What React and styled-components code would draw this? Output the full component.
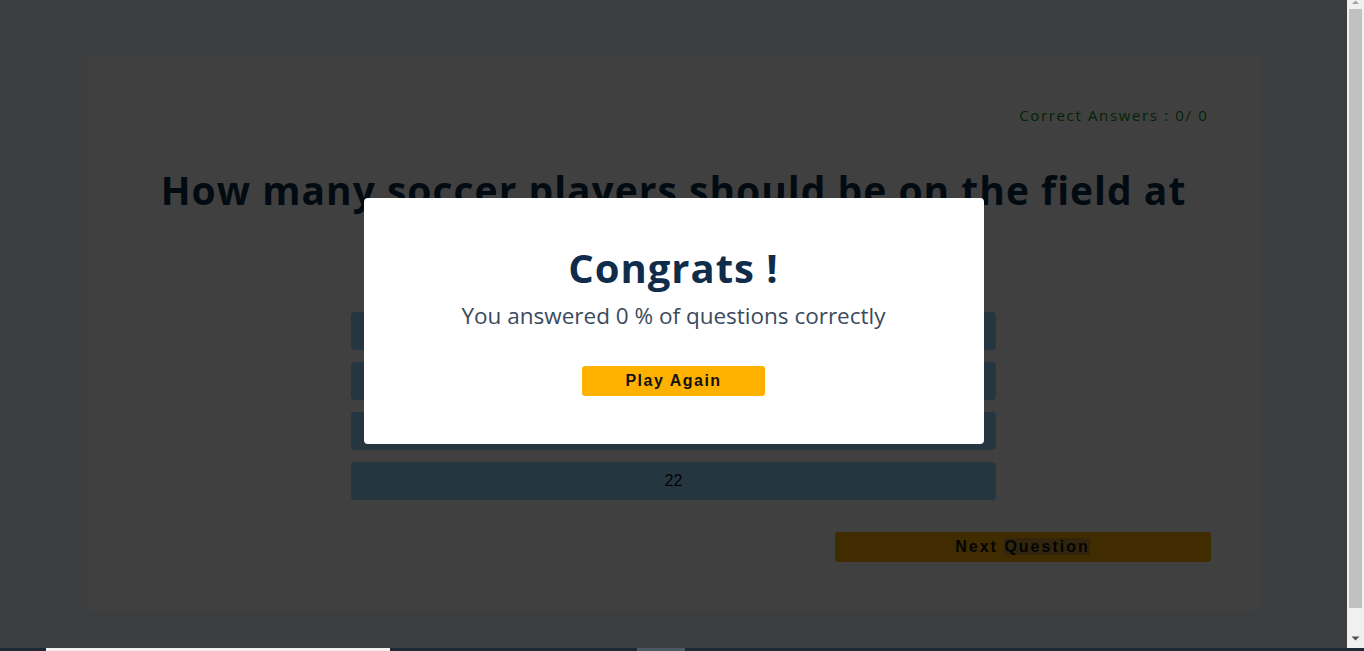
import React from "react";
import styled, { createGlobalStyle } from "styled-components";

const GlobalStyle = createGlobalStyle`
  html, body {
    margin: 0;
    padding: 0;
    overflow: hidden;
  }
  body {
    background: #1d2935;
    font-family: "Segoe UI", "Open Sans", "Noto Sans", sans-serif;
  }
`;

const Screen = styled.div`
  height: 100vh;
  display: flex;
  flex-direction: column;
`;

const Window = styled.div`
  flex: 1;
  min-height: 0;
  display: flex;
`;

const Pane = styled.div`
  flex: 1;
  position: relative;
  overflow: hidden;
  background: #f4f8ff;
`;

const ScrollTrack = styled.div`
  width: 17px;
  background: #f0f0f0;
  display: flex;
  flex-direction: column;
  align-items: center;
`;

const Thumb = styled.div`
  width: 13px;
  height: 599px;
  margin-top: 5px;
  background: #c1c1c1;
`;

const Arrow = styled.svg`
  display: block;
  flex-shrink: 0;
  margin-bottom: ${(p) => p.$bottom || 0}px;
`;

const Spacer = styled.div`
  flex: 1;
`;

const Taskbar = styled.div`
  height: 3px;
  display: flex;
  background: #1d2935;
`;

const TaskItem = styled.div`
  margin-left: ${(p) => p.$left}px;
  width: ${(p) => p.$width}px;
  background: ${(p) => p.$color};
`;

const Page = styled.main`
  padding: 56px 0 56px;
`;

const Card = styled.section`
  max-width: 1170px;
  margin: 0 auto;
  background: #ffffff;
  padding: 48px 48px 48px;
  box-sizing: border-box;
  display: flex;
  flex-direction: column;
`;

const Score = styled.div`
  align-self: flex-end;
  margin-right: 2px;
  font-size: 15px;
  line-height: 22px;
  letter-spacing: 1.65px;
  color: #0a8a12;
`;

const Question = styled.h1`
  margin: 40px auto 0;
  max-width: 1060px;
  text-align: center;
  font-size: 39px;
  line-height: 48px;
  font-weight: 700;
  letter-spacing: 1px;
  color: #0f2d4a;
`;

const Answers = styled.div`
  width: 645px;
  margin: 50px auto 0;
  display: flex;
  flex-direction: column;
  gap: 12px;
`;

const Answer = styled.button`
  height: 38px;
  border: none;
  border-radius: 4px;
  background: #99d5ff;
  color: #06121e;
  font-family: "Liberation Sans", Arial, sans-serif;
  font-size: 16px;
`;

const Footer = styled.div`
  display: flex;
  justify-content: flex-end;
  margin-top: 32px;
`;

const YellowButton = styled.button`
  width: ${(p) => p.$width}px;
  height: 30px;
  border: none;
  border-radius: 3px;
  background: #ffb100;
  color: #111;
  font-family: "Liberation Sans", Arial, sans-serif;
  font-size: 16px;
  font-weight: 700;
  letter-spacing: ${(p) => p.$spacing}px;
  padding: 0;
`;

const Selected = styled.span`
  background: rgba(120, 120, 120, 0.45);
`;

const Overlay = styled.div`
  position: absolute;
  inset: 0;
  background: rgba(0, 0, 0, 0.75);
  display: flex;
  align-items: center;
  justify-content: center;
`;

const Modal = styled.div`
  width: 620px;
  box-sizing: border-box;
  background: #fff;
  border-radius: 4px;
  padding: 46px 30px 48px;
  display: flex;
  flex-direction: column;
  align-items: center;
  margin-bottom: 6px;
`;

const ModalTitle = styled.h2`
  margin: 0;
  font-size: 40px;
  line-height: 48px;
  font-weight: 700;
  letter-spacing: 1px;
  color: #0f2d4a;
`;

const ModalText = styled.p`
  margin: 8px 0 0;
  font-size: 22.5px;
  line-height: 32px;
  color: #3a4a5e;
`;

const ModalAction = styled.div`
  margin-top: 34px;
`;

const answers = ["", "", "", "22"];

export default function App() {
  return (
    <>
      <GlobalStyle />
      <Screen>
        <Window>
          <Pane>
            <Page>
              <Card>
                <Score>Correct Answers : 0/ 0</Score>
                <Question>
                  How many soccer players should be on the field at the same
                  time?
                </Question>
                <Answers>
                  {answers.map((a, i) => (
                    <Answer key={i}>{a}</Answer>
                  ))}
                </Answers>
                <Footer>
                  <YellowButton $width={376} $spacing={2}>
                    Next <Selected>Question</Selected>
                  </YellowButton>
                </Footer>
              </Card>
            </Page>
            <Overlay>
              <Modal>
                <ModalTitle>Congrats !</ModalTitle>
                <ModalText>You answered 0 % of questions correctly</ModalText>
                <ModalAction>
                  <YellowButton $width={183} $spacing={1.5}>
                    Play Again
                  </YellowButton>
                </ModalAction>
              </Modal>
            </Overlay>
          </Pane>
          <ScrollTrack>
            <Arrow width="9" height="4" viewBox="0 0 9 4">
              <path d="M1 4 L4.5 0.5 L8 4 Z" fill="#a3a3a3" />
            </Arrow>
            <Thumb />
            <Spacer />
            <Arrow width="9" height="5" viewBox="0 0 9 5" $bottom={7}>
              <path d="M0.5 0.5 L8.5 0.5 L4.5 4.5 Z" fill="#505050" />
            </Arrow>
          </ScrollTrack>
        </Window>
        <Taskbar>
          <TaskItem $left={46} $width={344} $color="#f2f2f2" />
          <TaskItem $left={247} $width={48} $color="#4b5866" />
        </Taskbar>
      </Screen>
    </>
  );
}
